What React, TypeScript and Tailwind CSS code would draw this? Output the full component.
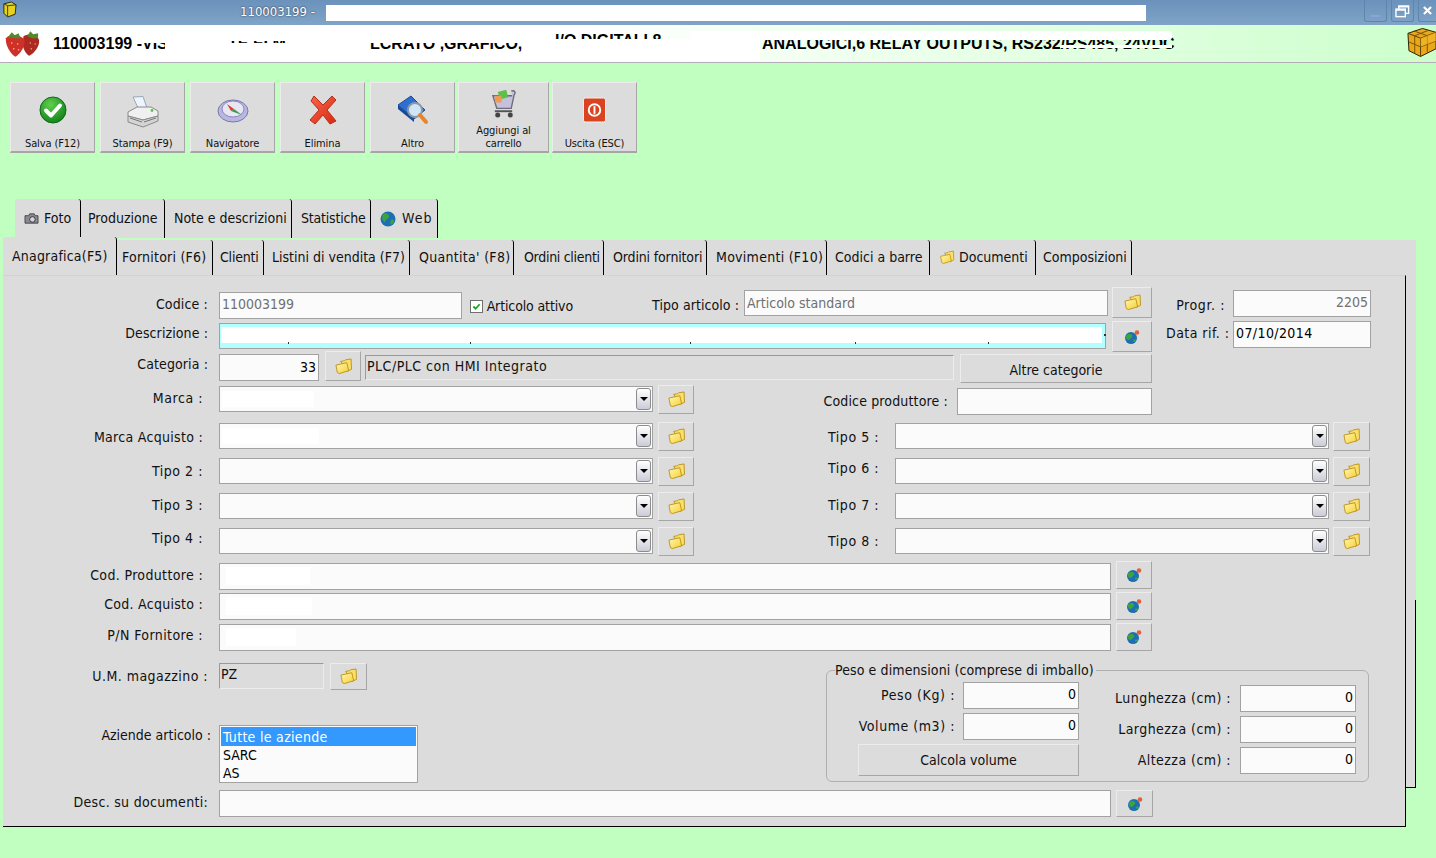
import React from "react";

function Folder({ className = "" }: { className?: string }) {
  return (
    <svg viewBox="0 0 20 18" className={className}>
      <defs>
        <linearGradient id="fg" x1="0" y1="0" x2="1" y2="1">
          <stop offset="0" stopColor="#fff8b0" />
          <stop offset="1" stopColor="#f6cf35" />
        </linearGradient>
      </defs>
      <path d="M7 3.5 L11 3 L12 2 L18 1 L18.5 12 L14 14 Z" fill="#f8e06c" stroke="#b98a10" strokeWidth="0.9" strokeLinejoin="round" />
      <path d="M2 7.5 L13.5 5 L15.5 13.5 L5.5 16.5 L3.5 15.5 Z" fill="url(#fg)" stroke="#b98a10" strokeWidth="0.9" strokeLinejoin="round" />
    </svg>
  );
}

function GlobeDot({ className = "" }: { className?: string }) {
  return (
    <svg viewBox="0 0 16 16" className={className}>
      <circle cx="7" cy="9" r="6" fill="#1c6fb5" />
      <path d="M2 7 C4 4 7 5 8 6 C9 8 7 9 6 10 C5 12 3 11 2 9 Z" fill="#3da33c" />
      <path d="M9 11 C11 10 12 11 12 12 C10 14 9 13 9 11 Z" fill="#3da33c" />
      <path d="M3 13 A6 6 0 0 0 11 13 A7 7 0 0 1 3 13" fill="#0c3558" />
      <circle cx="13" cy="3.5" r="2.3" fill="#e2603c" />
    </svg>
  );
}

function BevelBtn({ className = "", children }: { className?: string; children?: React.ReactNode }) {
  return (
    <div className={"box-border shrink-0 flex items-center justify-center bg-[#dcdcdc] border border-t-[#ececec] border-l-[#ececec] border-r-[#a6a6a6] border-b-[#a6a6a6] " + className}>
      {children}
    </div>
  );
}

const FolderBtn = ({ className = "" }: { className?: string }) => (
  <BevelBtn className={className}><Folder className="w-[19px] h-[17px]" /></BevelBtn>
);
const GlobeBtn = ({ className = "" }: { className?: string }) => (
  <BevelBtn className={className}><GlobeDot className="w-[16px] h-[16px]" /></BevelBtn>
);

function Label({ className = "", children }: { className?: string; children: React.ReactNode }) {
  return <div className={"shrink-0 h-[20px] leading-[20px] text-right whitespace-nowrap text-[#111] " + className}>{children}</div>;
}

function Field({ className = "", children }: { className?: string; children?: React.ReactNode }) {
  return (
    <div className={"box-border shrink-0 bg-[#fbfbfb] border border-[#a2a2a2] leading-[22px] whitespace-nowrap overflow-hidden " + className}>
      {children}
    </div>
  );
}

function Combo({ className = "", blank }: { className?: string; blank?: string }) {
  return (
    <div className={"box-border shrink-0 relative w-[434px] h-[26px] bg-[#fbfbfb] border border-[#a2a2a2] flex items-center justify-between pl-[2px] pr-[1px] " + className}>
      {blank === "a" ? <div className="h-[16px] w-[92px] bg-white" /> : blank === "b" ? <div className="h-[16px] w-[97px] bg-white" /> : <div />}
      <div className="box-border w-[15px] h-[22px] rounded-[3px] border border-[#8c8c8c] bg-linear-to-b from-white to-[#ccccd8] flex items-center justify-center">
        <div className="w-0 h-0 border-l-[4px] border-r-[4px] border-t-[4px] border-l-transparent border-r-transparent border-t-black" />
      </div>
    </div>
  );
}

const tabBase = "box-border shrink-0 bg-[#dcdcdc] rounded-t-[3px] border-r border-r-black flex items-center whitespace-nowrap";

function TopTab({ className = "", children }: { className?: string; children: React.ReactNode }) {
  return <div className={tabBase + " h-[39px] " + className}>{children}</div>;
}
function Tab({ className = "", children }: { className?: string; children: React.ReactNode }) {
  return <div className={tabBase + " h-[35px] " + className}>{children}</div>;
}

function TbBtn({ className = "", icon, label }: { className?: string; icon: React.ReactNode; label: React.ReactNode }) {
  return (
    <div className={"box-border shrink-0 h-[71px] relative bg-[#dcdcdc] border border-t-[#ececec] border-l-[#ececec] border-r-[#a6a6a6] border-b-2 border-b-[#a6a6a6] " + className}>
      <div className="flex justify-center h-[54px] items-center">{icon}</div>
      <div className="absolute bottom-[1px] left-0 right-0 text-center text-[11px] leading-[13px] text-[#111] tracking-[-0.1px]">{label}</div>
    </div>
  );
}

const headText = "whitespace-nowrap font-['Liberation_Sans',sans-serif] font-bold text-[16px] leading-[20px] text-black";

export default function App() {
  return (
    <div className="relative w-[1436px] h-[858px] overflow-hidden bg-[#c0ffc0] text-[14px] text-[#111] font-['DejaVu_Sans_Condensed','DejaVu_Sans','Noto_Sans',sans-serif]">
      {/* Title bar */}
      <div className="h-[25px] bg-linear-to-b from-[#6b92bb] to-[#7fa4c7] flex items-start">
        <svg viewBox="0 0 16 18" className="w-[15px] h-[17px] ml-[2px] mt-[1px]">
          <path d="M2 3 L10 1 L15 4 L14 14 L6 17 L2 13 Z" fill="#e5d21c" stroke="#222" strokeWidth="1" />
          <path d="M6 5 L6 16 M2 3 L6 5 L15 4" stroke="#333" strokeWidth="1" fill="none" />
        </svg>
        <div className="ml-[223px] mt-[3px] w-[86px] text-[13px] leading-[18px] text-white whitespace-nowrap font-medium [text-shadow:0_0_2px_#223]">110003199 -</div>
        <div className="mt-[5px] w-[820px] h-[16px] bg-white" />
        <div className="ml-[218px] box-border w-[23px] h-[22px] rounded-b-[3px] border border-[#5f85ad] border-t-0 flex items-end justify-center pb-[4px]">
          <div className="w-[9px] h-[2px] bg-[#8fa0e0]" />
        </div>
        <div className="ml-[4px] box-border w-[23px] h-[22px] rounded-b-[3px] border border-[#5f85ad] border-t-0 flex items-center justify-center">
          <svg viewBox="0 0 16 14" className="w-[15px] h-[14px]" fill="none" stroke="white" strokeWidth="1.5">
            <rect x="1" y="5" width="10" height="8" />
            <path d="M4 5 V1.5 H14.5 V9.5 H11" />
            <path d="M1 6 H11 M4 2.5 H14.5" />
          </svg>
        </div>
        <div className="ml-[4px] box-border w-[18px] h-[22px] rounded-bl-[3px] border-l border-b border-[#5f85ad] flex items-center justify-center">
          <svg viewBox="0 0 10 10" className="w-[9px] h-[9px]" stroke="white" strokeWidth="2.4"><path d="M1 1 L9 9 M9 1 L1 9" /></svg>
        </div>
      </div>

      {/* Header */}
      <div className="box-border relative h-[38px] border-b border-b-[#b3aeb8] bg-linear-to-r from-white from-40% to-[#ccffcc] to-100% flex items-center">
        <svg viewBox="0 0 38 27" className="w-[37px] h-[27px] ml-[4px]">
          <path d="M20 6 C25 3 34 4 36 10 C37 16 31 24 26 26 C23 25 20 20 19 14 Z" fill="#ad2a22" />
          <path d="M2 8 C6 3 17 4 21 10 C22 17 16 25 12 27 C7 25 1 15 2 8 Z" fill="#cf3128" />
          <path d="M4 7 L8 2 L11 5 L15 3 L17 8 L11 8 Z M24 6 L27 1 L30 4 L35 3 L35 8 L29 8 Z" fill="#53892c" />
          <circle cx="8" cy="13" r="0.8" fill="#f5c6a0" /><circle cx="14" cy="14" r="0.8" fill="#f5c6a0" /><circle cx="10" cy="19" r="0.8" fill="#f5c6a0" /><circle cx="15" cy="20" r="0.8" fill="#f5c6a0" /><circle cx="27" cy="13" r="0.8" fill="#e8a080" /><circle cx="32" cy="14" r="0.8" fill="#e8a080" /><circle cx="28" cy="19" r="0.8" fill="#e8a080" />
        </svg>
        <div className={"ml-[12px] w-[87px] " + headText}>110003199 -</div>
        <div className={"ml-[2px] w-[86px] " + headText}>VIS</div>
        <div className={"w-[142px] " + headText}>TE EI M</div>
        <div className={"w-[185px] " + headText}>LCRATO ,GRAFICO,</div>
        <div className={"w-[207px] -mt-[6px] " + headText}>I/O DIGITALI 8</div>
        <div className={headText}>ANALOGICI,6 RELAY OUTPUTS, RS232/RS485, 24VDC</div>

        {/* Blanked parts of the description */}
        <div className="absolute left-[141px] top-[3px] w-[87px] h-[15px] bg-white" />
        <div className="absolute left-[165px] top-[3px] w-[63px] h-[30px] bg-white" />
        <div className="absolute left-[228px] top-[3px] w-[132px] h-[13px] bg-white" />
        <div className="absolute left-[228px] top-[18px] w-[132px] h-[14px] bg-white" />
        <div className="absolute left-[360px] top-[3px] w-[190px] h-[15px] bg-white" />
        <div className="absolute left-[550px] top-[14px] w-[210px] h-[22px] bg-white" />
        <div className="absolute left-[690px] top-[6px] w-[482px] h-[9px] bg-white rounded-[3px]" />
        <div className="absolute left-[1060px] top-[20px] w-[112px] h-[3px] bg-white" />

        <svg viewBox="0 0 30 30" className="absolute left-[1407px] top-[2px] w-[29px] h-[30px]">
          <path d="M1 6 L16 1 L30 5 L30 22 L14 30 L2 24 Z" fill="#e9a81c" stroke="#2a1c00" strokeWidth="1" />
          <path d="M1 6 L14 11 L30 5 M14 11 L14 30" stroke="#5a3c00" strokeWidth="1" fill="none" />
          <path d="M7 3.5 L21 8.5 L21 26 M2 15 L14 20 L30 14 M22 3 L8 8.5 L8 27" stroke="#7a5200" strokeWidth="1" fill="none" />
          <path d="M14 11 L30 5 L30 14 L14 20 Z" fill="#f3bb2a" opacity="0.6" />
        </svg>
      </div>

      {/* Toolbar */}
      <div className="mt-[19px] ml-[10px] flex">
        <TbBtn className="w-[85px]" label="Salva (F12)" icon={
          <svg viewBox="0 0 28 28" className="w-[28px] h-[28px]">
            <defs><radialGradient id="chk" cx="0.4" cy="0.3" r="0.8"><stop offset="0" stopColor="#5fd04e" /><stop offset="1" stopColor="#0a7a12" /></radialGradient></defs>
            <circle cx="14" cy="14" r="13" fill="url(#chk)" stroke="#0d6a14" />
            <path d="M7 14.5 L12 19.5 L21 9.5" fill="none" stroke="white" strokeWidth="4" strokeLinejoin="round" strokeLinecap="round" />
          </svg>} />
        <TbBtn className="ml-[5px] w-[85px]" label="Stampa (F9)" icon={
          <svg viewBox="0 0 32 32" className="w-[32px] h-[32px] mt-[3px]">
            <path d="M6 1 L16 0.5 L20 12 L12 14 Z" fill="#eef4fd" stroke="#9aa6b8" />
            <path d="M1 16 L10 11 L24 11 L31 15 L31 20 L16 24 L1 20 Z" fill="#f0f0f0" stroke="#8a8a8a" />
            <path d="M1 20 L16 24 L31 20 L31 25 L16 31 L1 26 Z" fill="#d4d4d4" stroke="#8a8a8a" />
            <path d="M3 22 L15 26 M17 26 L29 22" stroke="#777" />
            <circle cx="25" cy="14.5" r="1.4" fill="#58c24a" />
          </svg>} />
        <TbBtn className="ml-[5px] w-[85px]" label="Navigatore" icon={
          <svg viewBox="0 0 32 26" className="w-[32px] h-[26px]">
            <ellipse cx="16" cy="14" rx="15" ry="11" fill="#b9b6e2" stroke="#7a78a8" />
            <ellipse cx="16" cy="12" rx="11" ry="8" fill="#e7e7f3" stroke="#8a88b8" />
            <path d="M10 7 L17 12 L14 14 Z" fill="#e23b2a" />
            <path d="M17 12 L25 18 L14 14 Z" fill="#3a9a4a" />
          </svg>} />
        <TbBtn className="ml-[5px] w-[85px]" label="Elimina" icon={
          <svg viewBox="0 0 28 30" className="w-[28px] h-[30px]">
            <defs><linearGradient id="xg" x1="0" y1="0" x2="1" y2="1"><stop offset="0" stopColor="#f9664a" /><stop offset="1" stopColor="#d62a12" /></linearGradient></defs>
            <path d="M5 1 L14 10 L23 1 L27 5 L18 15 L27 26 L21 29 L14 20 L6 29 L1 25 L10 15 L2 6 Z" fill="url(#xg)" stroke="#b5301a" strokeLinejoin="round" />
          </svg>} />
        <TbBtn className="ml-[5px] w-[85px]" label="Altro" icon={
          <svg viewBox="0 0 32 30" className="w-[32px] h-[30px]">
            <path d="M1 10 L14 1 L28 15 L17 24 Z" fill="#2f6fd0" stroke="#1b4a9a" />
            <path d="M1 10 L17 24 L17 27 L1 14 Z" fill="#174a96" />
            <circle cx="18" cy="15" r="7" fill="#cfe6f5" stroke="#8a9aa8" strokeWidth="2" />
            <path d="M23 20 L29 27" stroke="#e8852a" strokeWidth="4" strokeLinecap="round" />
          </svg>} />
        <TbBtn className="ml-[3px] w-[91px]" label={<>Aggiungi al<br />carrello</>} icon={
          <svg viewBox="0 0 28 32" className="w-[27px] h-[31px] -mt-[14px]">
            <path d="M22 3 C26 2 27 5 25 7 L22 21 L7 21 L3 8 L23 8" fill="#c5c0dd" stroke="#6b6b7a" strokeWidth="1.4" />
            <rect x="9" y="3" width="9" height="8" fill="#5cc04a" transform="rotate(-15 13 7)" />
            <rect x="5" y="8" width="7" height="7" fill="#ef9a55" />
            <path d="M5 24 H23" stroke="#555" strokeWidth="2" />
            <circle cx="8" cy="28" r="2.6" fill="#444" /><circle cx="21" cy="28" r="2.6" fill="#444" />
          </svg>} />
        <TbBtn className="ml-[3px] w-[85px]" label="Uscita (ESC)" icon={
          <svg viewBox="0 0 24 26" className="w-[23px] h-[26px]">
            <rect x="0.5" y="0.5" width="23" height="25" rx="2" fill="#d9431f" stroke="#f2f2f2" />
            <circle cx="12" cy="13" r="6" fill="none" stroke="white" strokeWidth="2" />
            <path d="M12 9 V17" stroke="white" strokeWidth="2" />
          </svg>} />
      </div>

      {/* Upper tabs */}
      <div className="mt-[46px] ml-[15px] flex">
        <TopTab className="w-[66px] pl-[9px]">
          <svg viewBox="0 0 16 14" className="w-[15px] h-[13px] mr-[5px]"><path d="M1 4 H5 L6 2 H11 L12 4 H15 V12 H1 Z" fill="#8a8a96" stroke="#444" /><circle cx="9" cy="8" r="3" fill="#d5d5de" stroke="#333" /></svg>
          Foto
        </TopTab>
        <TopTab className="w-[84px] pl-[7px]">Produzione</TopTab>
        <TopTab className="w-[127px] pl-[9px]">Note e descrizioni</TopTab>
        <TopTab className="w-[79px] pl-[9px] tracking-[-0.2px]">Statistiche</TopTab>
        <TopTab className="w-[67px] pl-[9px]">
          <svg viewBox="0 0 16 16" className="w-[16px] h-[16px] mr-[6px]"><circle cx="8" cy="8" r="7.5" fill="#1c6fb5" /><path d="M3 3 C6 1 9 3 9 5 C9 8 6 8 5 11 C3 11 1 7 3 3 Z M11 9 C13 8 15 9 14 11 C13 13 11 14 10 13 Z" fill="#3da33c" /></svg>
          <span className="tracking-[1px]">Web</span>
        </TopTab>
      </div>

      {/* Tab area */}
      <div className="relative">
        <div className="box-border absolute left-[15px] top-[2px] w-[1401px] h-[548px] bg-[#dcdcdc] border-b border-b-black">
          <div className="absolute right-0 top-[360px] bottom-0 w-[1px] bg-black" />
        </div>

        <div className="relative h-[37px] flex items-end ml-[3px]">
          <div className={tabBase + " h-[39px] w-[114px] pl-[9px] -mb-[1px] tracking-[0.2px]"}>Anagrafica(F5)</div>
          <Tab className="w-[96px] pl-[5px] tracking-[0.23px]">Fornitori (F6)</Tab>
          <Tab className="w-[51px] pl-[7px] tracking-[-0.2px]">Clienti</Tab>
          <Tab className="w-[146px] pl-[8px]">Listini di vendita (F7)</Tab>
          <Tab className="w-[104px] pl-[9px] tracking-[0.3px]">Quantita' (F8)</Tab>
          <Tab className="w-[90px] pl-[10px] tracking-[-0.3px]">Ordini clienti</Tab>
          <Tab className="w-[103px] pl-[9px] tracking-[-0.15px]">Ordini fornitori</Tab>
          <Tab className="w-[120px] pl-[9px] tracking-[0.27px]">Movimenti (F10)</Tab>
          <Tab className="w-[103px] pl-[8px]">Codici a barre</Tab>
          <Tab className="w-[106px] pl-[9px]">
            <Folder className="w-[16px] h-[15px] mr-[4px]" />
            Documenti
          </Tab>
          <Tab className="w-[96px] pl-[7px]">Composizioni</Tab>
        </div>

        {/* Front panel */}
        <div className="box-border relative ml-[3px] w-[1403px] h-[552px] pt-[12px] bg-[#dcdcdc] border-t border-t-[#d2d2d2] border-r border-r-black border-b border-b-black">
          {/* Codice */}
          <div className="flex items-start h-[34px] -mt-[1px]">
            <Label className="w-[205px] mt-[7px] tracking-[0.15px]">Codice :</Label>
            <Field className="ml-[11px] w-[243px] h-[27px] mt-[5px] pl-[2px] text-[#707070]">110003199</Field>
            <div className="box-border ml-[8px] mt-[13px] w-[13px] h-[13px] border border-[#707070] bg-white flex items-center justify-center">
              <svg viewBox="0 0 10 10" className="w-[9px] h-[9px]"><path d="M1.5 5 L4 7.5 L8.5 2.5" fill="none" stroke="#21a121" strokeWidth="2" /></svg>
            </div>
            <Label className="ml-[3px] w-[87px] mt-[9px] text-left tracking-[-0.13px]">Articolo attivo</Label>
            <Label className="ml-[79px] w-[87px] mt-[8px] tracking-[0.07px]">Tipo articolo :</Label>
            <Field className="ml-[5px] w-[364px] h-[26px] mt-[3px] pl-[2px] text-[#707070] leading-[24px]">Articolo standard</Field>
            <FolderBtn className="ml-[4px] w-[40px] h-[31px]" />
            <Label className="ml-[24px] w-[49px] mt-[8px] tracking-[0.6px]">Progr. :</Label>
            <Field className="ml-[8px] w-[138px] h-[27px] mt-[3px] pr-[2px] text-right text-[#707070]">2205</Field>
          </div>

          {/* Descrizione */}
          <div className="flex items-start h-[30px]">
            <Label className="w-[205px] mt-[2px] tracking-[0.1px]">Descrizione :</Label>
            <div className="box-border relative shrink-0 ml-[11px] w-[887px] h-[26px] mt-[2px] bg-[#b3ffff] border border-[#a2a2a2] py-[3px] pl-[1px] pr-[3px]">
              <div className="h-[16px] bg-white" />
              <div className="absolute left-[68px] top-[18px] w-[1px] h-[2px] bg-[#333]" />
              <div className="absolute left-[250px] top-[18px] w-[1px] h-[2px] bg-[#333]" />
              <div className="absolute left-[470px] top-[18px] w-[1px] h-[2px] bg-[#333]" />
              <div className="absolute left-[635px] top-[18px] w-[1px] h-[2px] bg-[#333]" />
              <div className="absolute left-[768px] top-[18px] w-[1px] h-[2px] bg-[#333]" />
              <div className="absolute left-[884px] top-[10px] w-[2px] h-[2px] bg-[#333]" />
            </div>
            <GlobeBtn className="ml-[6px] w-[40px] h-[31px]" />
            <Label className="ml-[14px] w-[63px] mt-[2px] tracking-[0.45px]">Data rif. :</Label>
            <Field className="ml-[4px] w-[138px] h-[27px] pl-[2px] text-black tracking-[0.4px]">07/10/2014</Field>
          </div>

          {/* Categoria */}
          <div className="flex items-start h-[34px]">
            <Label className="w-[205px] mt-[3px] tracking-[0.1px]">Categoria :</Label>
            <Field className="ml-[11px] w-[100px] h-[27px] mt-[3px] pr-[2px] text-right leading-[24px] text-black">33</Field>
            <FolderBtn className="ml-[6px] w-[36px] h-[30px]" />
            <div className="box-border shrink-0 ml-[4px] w-[589px] h-[25px] mt-[4px] pl-[1px] bg-[#dcdcdc] border border-t-[#9a9a9a] border-l-[#9a9a9a] border-r-[#ececec] border-b-[#ececec] leading-[20px] whitespace-nowrap tracking-[0.5px]">PLC/PLC con HMI Integrato</div>
            <BevelBtn className="ml-[6px] w-[192px] h-[29px] mt-[3px] pt-[3px]">Altre categorie</BevelBtn>
          </div>

          {/* Marca */}
          <div className="flex items-start h-[37px]">
            <Label className="w-[200px] mt-[3px] tracking-[0.55px]">Marca :</Label>
            <Combo className="ml-[16px] mt-[1px]" blank="a" />
            <FolderBtn className="ml-[5px] w-[36px] h-[29px]" />
            <Label className="ml-[129px] w-[125px] mt-[6px] tracking-[0.15px]">Codice produttore :</Label>
            <Field className="ml-[9px] w-[195px] h-[27px] mt-[3px]" />
          </div>

          {/* Marca Acquisto / Tipo 5 */}
          <div className="flex items-start h-[35px]">
            <Label className="w-[200px] mt-[5px] tracking-[0.3px]">Marca Acquisto :</Label>
            <Combo className="ml-[16px] mt-[1px]" blank="b" />
            <FolderBtn className="ml-[5px] w-[36px] h-[29px]" />
            <Label className="ml-[134px] w-[51px] mt-[5px] tracking-[0.55px]">Tipo 5 :</Label>
            <Combo className="ml-[16px] mt-[1px]" />
            <FolderBtn className="ml-[4px] w-[37px] h-[29px]" />
          </div>

          {/* Tipo 2 / Tipo 6 */}
          <div className="flex items-start h-[35px]">
            <Label className="w-[200px] mt-[4px] tracking-[0.55px]">Tipo 2 :</Label>
            <Combo className="ml-[16px] mt-[1px]" />
            <FolderBtn className="ml-[5px] w-[36px] h-[29px]" />
            <Label className="ml-[134px] w-[51px] mt-[1px] tracking-[0.55px]">Tipo 6 :</Label>
            <Combo className="ml-[16px] mt-[1px]" />
            <FolderBtn className="ml-[4px] w-[37px] h-[29px]" />
          </div>

          {/* Tipo 3 / Tipo 7 */}
          <div className="flex items-start h-[35px]">
            <Label className="w-[200px] mt-[3px] tracking-[0.55px]">Tipo 3 :</Label>
            <Combo className="ml-[16px] mt-[1px]" />
            <FolderBtn className="ml-[5px] w-[36px] h-[29px]" />
            <Label className="ml-[134px] w-[51px] mt-[3px] tracking-[0.55px]">Tipo 7 :</Label>
            <Combo className="ml-[16px] mt-[1px]" />
            <FolderBtn className="ml-[4px] w-[37px] h-[29px]" />
          </div>

          {/* Tipo 4 / Tipo 8 */}
          <div className="flex items-start h-[34px]">
            <Label className="w-[200px] mt-[1px] tracking-[0.55px]">Tipo 4 :</Label>
            <Combo className="ml-[16px] mt-[1px]" />
            <FolderBtn className="ml-[5px] w-[36px] h-[29px]" />
            <Label className="ml-[134px] w-[51px] mt-[4px] tracking-[0.55px]">Tipo 8 :</Label>
            <Combo className="ml-[16px] mt-[1px]" />
            <FolderBtn className="ml-[4px] w-[37px] h-[29px]" />
          </div>

          {/* Codes */}
          <div className="flex items-start h-[31px]">
            <Label className="w-[200px] mt-[4px] tracking-[0.35px]">Cod. Produttore :</Label>
            <Field className="ml-[16px] w-[892px] h-[27px] mt-[2px] pl-[6px] pt-[3px]"><div className="h-[18px] w-[84px] bg-white" /></Field>
            <GlobeBtn className="ml-[5px] w-[36px] h-[28px]" />
          </div>
          <div className="flex items-start h-[31px]">
            <Label className="w-[200px] mt-[2px] tracking-[0.27px]">Cod. Acquisto :</Label>
            <Field className="ml-[16px] w-[892px] h-[27px] mt-[1px] pl-[6px] pt-[3px]"><div className="h-[18px] w-[86px] bg-white" /></Field>
            <GlobeBtn className="ml-[5px] w-[36px] h-[28px]" />
          </div>
          <div className="flex items-start h-[40px]">
            <Label className="w-[200px] mt-[2px] tracking-[0.4px]">P/N Fornitore :</Label>
            <Field className="ml-[16px] w-[892px] h-[27px] mt-[1px] pl-[6px] pt-[3px]"><div className="h-[18px] w-[70px] bg-white" /></Field>
            <GlobeBtn className="ml-[5px] w-[36px] h-[28px]" />
          </div>

          {/* Lower block */}
          <div className="flex items-start h-[127px]">
            <div className="w-[823px] shrink-0">
              <div className="flex items-start h-[62px]">
                <Label className="w-[205px] mt-[3px] tracking-[0.45px]">U.M. magazzino :</Label>
                <div className="box-border shrink-0 ml-[11px] w-[105px] h-[26px] pl-[1px] bg-[#dcdcdc] border border-t-[#9a9a9a] border-l-[#9a9a9a] border-r-[#ececec] border-b-[#ececec] leading-[20px]">PZ</div>
                <FolderBtn className="ml-[6px] w-[37px] h-[27px]" />
              </div>
              <div className="flex items-start">
                <Label className="w-[208px]">Aziende articolo :</Label>
                <div className="box-border shrink-0 ml-[8px] w-[199px] h-[58px] p-[1px] bg-[#fbfbfb] border border-[#a2a2a2] leading-[18px] text-black">
                  <div className="bg-[#3399ff] text-white pl-[2px] pt-[1px] tracking-[0.3px]">Tutte le aziende</div>
                  <div className="pl-[2px]">SARC</div>
                  <div className="pl-[2px]">AS</div>
                </div>
              </div>
            </div>

            <fieldset className="box-border shrink-0 w-[543px] h-[122px] -mt-[3px] border border-[#b0b0b0] rounded-[6px] p-0 flex">
              <legend className="ml-[8px] px-0 pr-[2px] leading-[20px] h-[20px] whitespace-nowrap tracking-[0.1px]">Peso e dimensioni (comprese di imballo)</legend>
              <div className="flex">
                <div className="w-[252px] shrink-0 mt-[2px]">
                  <div className="flex items-start h-[31px]">
                    <Label className="w-[128px] mt-[3px] tracking-[0.6px]">Peso (Kg) :</Label>
                    <Field className="ml-[8px] w-[116px] h-[27px] pr-[2px] text-right text-black">0</Field>
                  </div>
                  <div className="flex items-start h-[31px]">
                    <Label className="w-[128px] mt-[3px] tracking-[0.55px]">Volume (m3) :</Label>
                    <Field className="ml-[8px] w-[116px] h-[27px] pr-[2px] text-right text-black">0</Field>
                  </div>
                  <BevelBtn className="ml-[31px] w-[221px] h-[32px]">Calcola volume</BevelBtn>
                </div>
                <div className="ml-[36px] mt-[5px] shrink-0">
                  <div className="flex items-start h-[31px]">
                    <Label className="w-[116px] mt-[3px] tracking-[0.45px]">Lunghezza (cm) :</Label>
                    <Field className="ml-[9px] w-[116px] h-[27px] pr-[2px] text-right text-black">0</Field>
                  </div>
                  <div className="flex items-start h-[31px]">
                    <Label className="w-[116px] mt-[3px] tracking-[0.45px]">Larghezza (cm) :</Label>
                    <Field className="ml-[9px] w-[116px] h-[27px] pr-[2px] text-right text-black">0</Field>
                  </div>
                  <div className="flex items-start h-[31px]">
                    <Label className="w-[116px] mt-[3px] tracking-[0.45px]">Altezza (cm) :</Label>
                    <Field className="ml-[9px] w-[116px] h-[27px] pr-[2px] text-right text-black">0</Field>
                  </div>
                </div>
              </div>
            </fieldset>
          </div>

          {/* Desc */}
          <div className="flex items-start">
            <Label className="w-[205px] mt-[2px] tracking-[0.3px]">Desc. su documenti:</Label>
            <Field className="ml-[11px] w-[892px] h-[27px]" />
            <GlobeBtn className="ml-[5px] w-[37px] h-[27px]" />
          </div>
        </div>
      </div>
    </div>
  );
}
